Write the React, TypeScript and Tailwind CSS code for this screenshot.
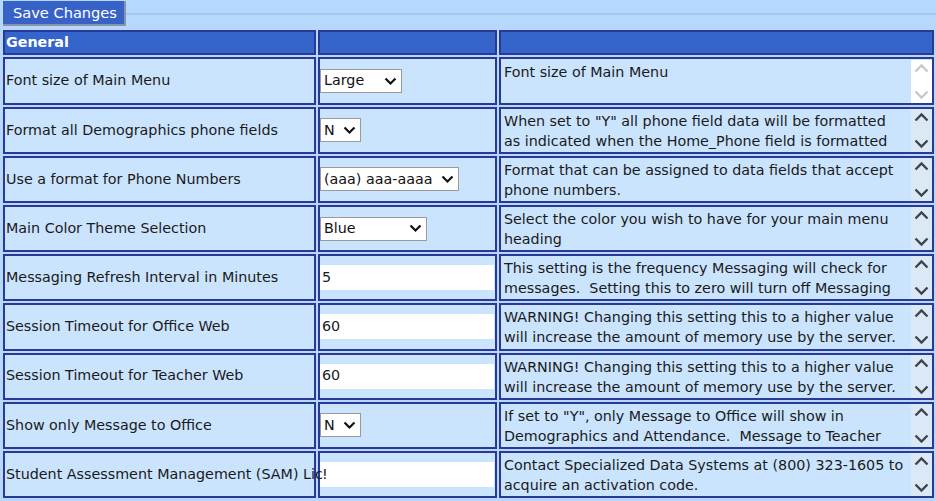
import React from 'react';

type Row = {
  label: string;
  control: { kind: 'select'; value: string; width: number } | { kind: 'input'; value: string };
  desc: string[];
  disabled?: boolean;
};

const rows: Row[] = [
  { label: 'Font size of Main Menu', control: { kind: 'select', value: 'Large', width: 82 }, desc: ['Font size of Main Menu'], disabled: true },
  {
    label: 'Format all Demographics phone fields',
    control: { kind: 'select', value: 'N', width: 41 },
    desc: ['When set to "Y" all phone field data will be formatted', 'as indicated when the Home_Phone field is formatted'],
  },
  {
    label: 'Use a format for Phone Numbers',
    control: { kind: 'select', value: '(aaa) aaa-aaaa', width: 139 },
    desc: ['Format that can be assigned to data fields that accept', 'phone numbers.'],
  },
  {
    label: 'Main Color Theme Selection',
    control: { kind: 'select', value: 'Blue', width: 107 },
    desc: ['Select the color you wish to have for your main menu', 'heading'],
  },
  {
    label: 'Messaging Refresh Interval in Minutes',
    control: { kind: 'input', value: '5' },
    desc: ['This setting is the frequency Messaging will check for', 'messages.  Setting this to zero will turn off Messaging'],
  },
  {
    label: 'Session Timeout for Office Web',
    control: { kind: 'input', value: '60' },
    desc: ['WARNING! Changing this setting this to a higher value', 'will increase the amount of memory use by the server.'],
  },
  {
    label: 'Session Timeout for Teacher Web',
    control: { kind: 'input', value: '60' },
    desc: ['WARNING! Changing this setting this to a higher value', 'will increase the amount of memory use by the server.'],
  },
  {
    label: 'Show only Message to Office',
    control: { kind: 'select', value: 'N', width: 41 },
    desc: ['If set to "Y", only Message to Office will show in', 'Demographics and Attendance.  Message to Teacher'],
  },
  {
    label: 'Student Assessment Management (SAM) Lic',
    control: { kind: 'input', value: '!' },
    desc: ['Contact Specialized Data Systems at (800) 323-1605 to', 'acquire an activation code.'],
  },
];

const Chevron = ({ up, faded }: { up?: boolean; faded?: boolean }) => (
  <svg width="15" height="10" viewBox="0 0 15 10">
    <path
      d={up ? 'M1.5 8.5 L7.5 2.5 L13.5 8.5' : 'M1.5 1.5 L7.5 7.5 L13.5 1.5'}
      fill="none"
      stroke={faded ? '#c4c8cf' : '#3f444c'}
      strokeWidth="2.4"
    />
  </svg>
);

const FakeSelect = ({ value, width }: { value: string; width: number }) => (
  <div
    className="flex h-[24px] items-center justify-between border border-[#9a9a9a] bg-white pl-[3px] pr-[4px] text-[14.3px] text-[#111]"
    style={{ width }}
  >
    <span className="whitespace-pre">{value}</span>
    <svg width="13" height="9" viewBox="0 0 13 9" className="ml-1 shrink-0">
      <path d="M1.5 1.5 L6.5 6.5 L11.5 1.5" fill="none" stroke="#111" strokeWidth="2.2" />
    </svg>
  </div>
);

export default function App() {
  return (
    <div className="h-[501px] w-[936px] overflow-hidden bg-[#b6d8fc] font-['DejaVu_Sans',sans-serif] text-[14.3px] text-[#1a1a1a]">
      {/* tab strip with save button */}
      <div className="flex items-start pt-px">
        <button className="ml-[3px] h-[25px] w-[123px] border-b-2 border-r-2 border-[#8a93a6] bg-[#3762c8] pl-[10px] text-left text-[14.6px] text-white">
          Save Changes
        </button>
        <div className="mt-[12px] h-[2px] flex-1 bg-[#a4c9f0]" />
      </div>

      <table className="ml-px mt-[2px] w-[935px] table-fixed border-separate border-spacing-[2px]">
        <colgroup>
          <col className="w-[313px]" />
          <col className="w-[179px]" />
          <col className="w-[435px]" />
        </colgroup>
        <thead>
          <tr className="h-[24px]">
            <th className="border-2 border-[#2a3896] bg-[#3565cb] p-0 pl-px text-left font-bold text-white">General</th>
            <th className="border-2 border-[#2a3896] bg-[#3565cb] p-0" />
            <th className="border-2 border-[#2a3896] bg-[#3565cb] p-0" />
          </tr>
        </thead>
        <tbody>
          {rows.map((r, i) => (
            <tr key={i} className="h-[47.2px]">
              <td className="whitespace-nowrap border-2 border-[#2a3896] bg-[#cbe4fe] p-0 pl-px align-middle">{r.label}</td>
              <td className="border-2 border-[#2a3896] bg-[#cbe4fe] p-0 align-middle">
                {r.control.kind === 'select' ? (
                  <FakeSelect value={r.control.value} width={r.control.width} />
                ) : (
                  <div className="mr-[1px] flex h-[25px] items-center bg-white pl-[2px]">{r.control.value}</div>
                )}
              </td>
              <td className="border-2 border-[#2a3896] bg-[#cbe4fe] p-0 align-middle">
                <div className="flex h-[43px] items-stretch">
                  <div className="flex-1 pl-[3px] pt-[2px] leading-[20px]">
                    {r.desc.map((d, j) => (
                      <div key={j} className="whitespace-pre">{d}</div>
                    ))}
                  </div>
                  <div
                    className={`flex w-[21px] flex-col items-center justify-between py-[3px] ${
                      r.disabled ? 'bg-white' : 'bg-[#dbe8f6]'
                    }`}
                  >
                    <Chevron up faded={r.disabled} />
                    <Chevron faded={r.disabled} />
                  </div>
                </div>
              </td>
            </tr>
          ))}
        </tbody>
      </table>
    </div>
  );
}
